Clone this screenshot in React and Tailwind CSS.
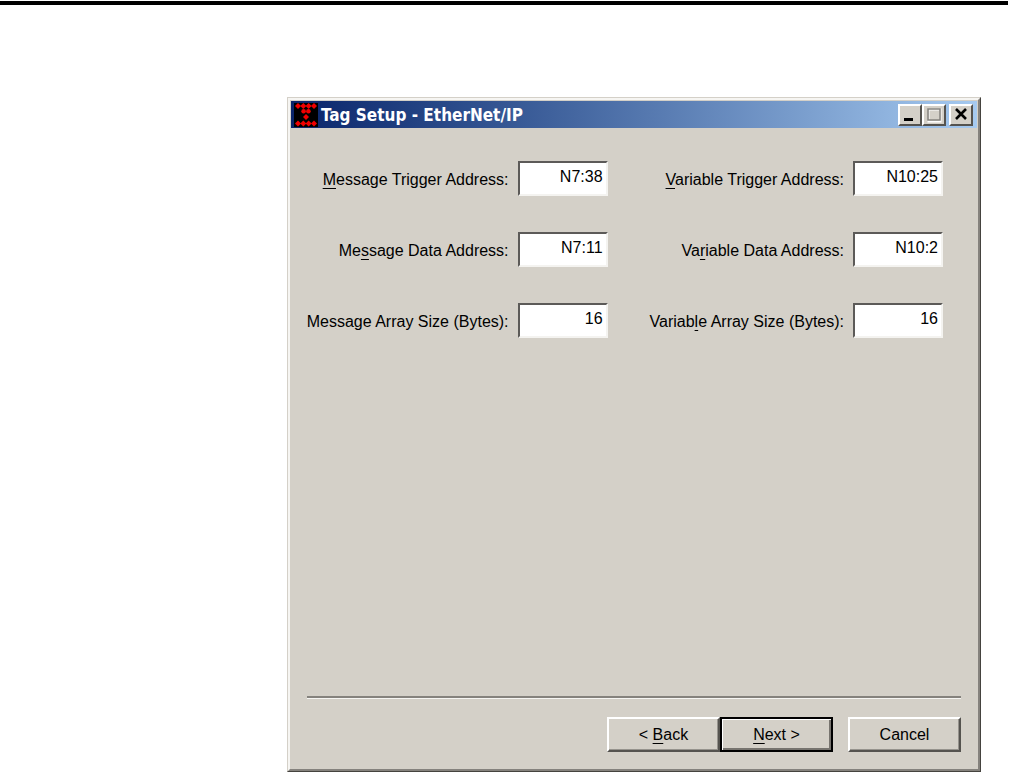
import { useState } from "react";

const MESSAGE_FIELDS = [
  { id: "messageTrigger", before: "", key: "M", after: "essage Trigger Address:", value: "N7:38" },
  { id: "messageData", before: "Me", key: "s", after: "sage Data Address:", value: "N7:11" },
  { id: "messageSize", before: "Message Array Size (Bytes):", key: "", after: "", value: "16" },
];

const VARIABLE_FIELDS = [
  { id: "variableTrigger", before: "", key: "V", after: "ariable Trigger Address:", value: "N10:25" },
  { id: "variableData", before: "Va", key: "r", after: "iable Data Address:", value: "N10:2" },
  { id: "variableSize", before: "Variab", key: "l", after: "e Array Size (Bytes):", value: "16" },
];

function AppIcon() {
  return (
    <svg viewBox="0 0 24 24" className="h-6 w-6 shrink-0" aria-hidden="true">
      <rect width="24" height="24" fill="#000" />
      <g fill="#f00000">
        {[4, 9.3, 14.6, 20].map((x) => (
          <path key={x} d={`M${x - 3} 3l3-3 3 3-3 3z`} />
        ))}
        {[4, 9.3, 14.6, 20].map((x) => (
          <path key={x} d={`M${x - 3} 20.5l3-3 3 3-3 3z`} />
        ))}
        <circle cx="9.6" cy="8.2" r="2.3" />
        <circle cx="14.4" cy="8.2" r="2.3" />
        <path d="M9 14l3-3 3 3-3 3z" />
      </g>
    </svg>
  );
}

function CaptionButton({ label, children }) {
  return (
    <button
      type="button"
      aria-label={label}
      className="h-[22px] w-6 border-2 border-t-white border-l-white border-r-[#55534f] border-b-[#55534f] bg-[#d4d0c8]"
    >
      <svg viewBox="0 0 20 18" className="block h-[18px] w-5" fill="none">
        {children}
      </svg>
    </button>
  );
}

function FieldGroup({ fields }) {
  const [values, setValues] = useState(fields.map((f) => f.value));

  return (
    <div className="flex flex-col items-end gap-9">
      {fields.map((f, i) => (
        <div key={f.id} className="flex items-center gap-[9px]">
          <label htmlFor={f.id} className="pt-0.5 whitespace-nowrap">
            {f.before}
            {f.key && <span className="underline underline-offset-3">{f.key}</span>}
            {f.after}
          </label>
          <input
            id={f.id}
            type="text"
            value={values[i]}
            onChange={(e) =>
              setValues(values.map((v, n) => (n === i ? e.target.value : v)))
            }
            className="h-[35px] w-[90px] border-2 border-t-[#5c5a58] border-l-[#5c5a58] border-r-[#f4f3f0] border-b-[#f4f3f0] bg-white pr-[3px] pb-1 text-right outline-none"
          />
        </div>
      ))}
    </div>
  );
}

function PushButton({ children, isDefault }) {
  return (
    <button
      type="button"
      className={
        isDefault
          ? "h-[35px] w-[113px] border-2 border-black bg-[#d4d0c8] shadow-[inset_1px_1px_0_#fff,inset_-2px_-2px_0_#77746f]"
          : "h-[35px] w-[113px] border-2 border-t-white border-l-white border-r-[#55534f] border-b-[#55534f] bg-[#d4d0c8] shadow-[inset_-1px_-1px_0_#96938d]"
      }
    >
      {children}
    </button>
  );
}

export default function App() {
  return (
    <div className="flex min-h-screen flex-col bg-white pt-px font-['Liberation_Sans',Arial,sans-serif] text-base leading-5 text-black">
      <hr className="mr-px border-0 border-t-4 border-black" />

      <main className="mt-[92px] mr-7 ml-[287px] flex grow flex-col border border-t-[#d4d0c8] border-l-[#d4d0c8] border-r-[#45433f] border-b-[#45433f] bg-[#d4d0c8]">
        <div className="flex grow flex-col border-2 border-t-[#f6f5f2] border-l-[#f6f5f2] border-r-[#85827d] border-b-[#85827d] p-px">
          <header className="flex h-[27px] items-center bg-linear-to-r from-[#0a246a] to-[#a6caf0] pr-1 pl-[3px]">
            <AppIcon />
            <h1 className="grow pl-[3px] font-['DejaVu_Sans_Condensed','DejaVu_Sans',sans-serif] text-[17px] font-bold whitespace-nowrap text-white">
              Tag Setup - EtherNet/IP
            </h1>
            <CaptionButton label="Minimize">
              <path d="M4 13.5h9" stroke="#000" strokeWidth="3" />
            </CaptionButton>
            <CaptionButton label="Maximize">
              <path d="M4.5 3.5h12v12h-12z" stroke="#fff" strokeWidth="2" />
              <path d="M4 3h12v11H4z" stroke="#85827d" strokeWidth="1.6" />
            </CaptionButton>
            <span className="w-[3px]" />
            <CaptionButton label="Close">
              <path d="M5 3l10 10M15 3L5 13" stroke="#000" strokeWidth="2.6" />
            </CaptionButton>
          </header>

          <form
            className="flex grow flex-col px-4 pb-4"
            onSubmit={(e) => e.preventDefault()}
          >
            <div className="flex justify-end gap-[42px] pt-[33px] pr-[18px]">
              <FieldGroup fields={MESSAGE_FIELDS} />
              <FieldGroup fields={VARIABLE_FIELDS} />
            </div>

            <hr className="mt-auto border-0 border-t-2 border-t-[#85827d] shadow-[0_1px_0_#f6f5f2]" />

            <div className="mt-[19px] flex justify-end">
              <PushButton>
                &lt; <span className="underline underline-offset-3">B</span>ack
              </PushButton>
              <PushButton isDefault>
                <span className="underline underline-offset-3">N</span>ext &gt;
              </PushButton>
              <span className="w-[15px]" />
              <PushButton>Cancel</PushButton>
            </div>
          </form>
        </div>
      </main>
    </div>
  );
}
